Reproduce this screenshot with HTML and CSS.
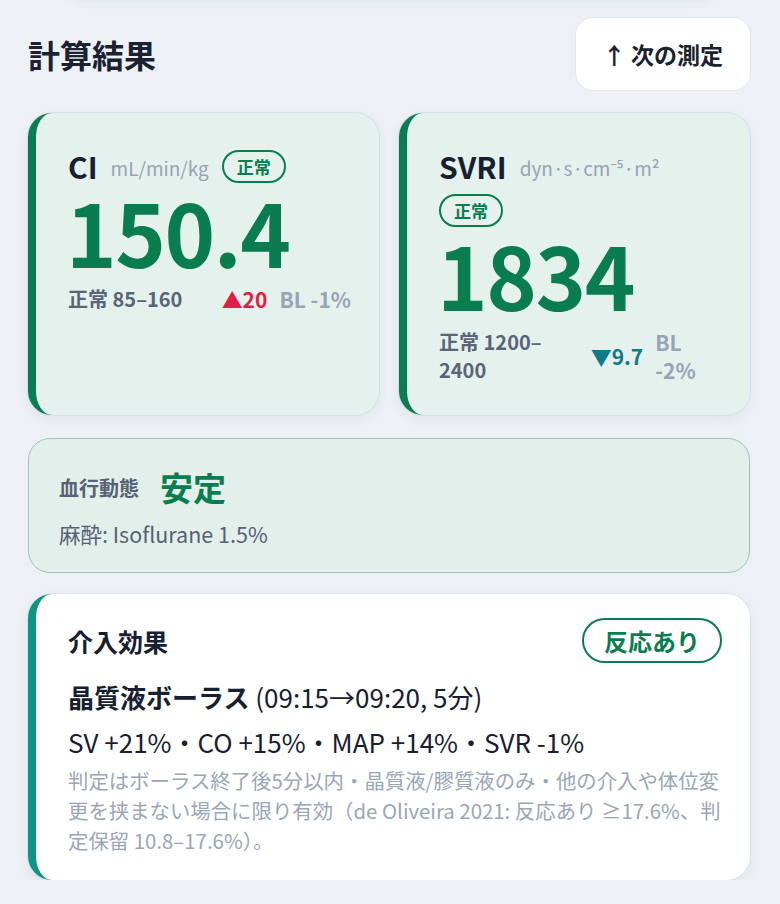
FILE: index.html
```html
<!DOCTYPE html>
<html lang="ja">
<head>
<meta charset="utf-8">
<title>計算結果</title>
<link rel="stylesheet" href="styles.css">
</head>
<body>
<div class="prev"></div>
<main class="page">
  <header class="head">
    <h2 class="title">計算結果</h2>
    <button class="next" type="button">↑ 次の測定</button>
  </header>

  <section class="grid">
    <article class="metric">
      <div class="m-head">
        <span class="m-name">CI</span>
        <span class="m-unit">mL/min/kg</span>
        <span class="badge">正常</span>
      </div>
      <div class="m-value">150.4</div>
      <div class="m-foot">
        <span class="range">正常 85–160</span>
        <span class="delta up">▲20</span>
        <span class="bl">BL -1%</span>
      </div>
    </article>

    <article class="metric">
      <div class="m-head">
        <span class="m-name">SVRI</span>
        <span class="m-unit">dyn·s·cm⁻⁵·m²</span>
        <span class="badge">正常</span>
      </div>
      <div class="m-value">1834</div>
      <div class="m-foot">
        <span class="range">正常 1200–2400</span>
        <span class="delta down">▼9.7</span>
        <span class="bl">BL -2%</span>
      </div>
    </article>
  </section>

  <section class="hemo">
    <div class="hemo-row">
      <span class="hemo-label">血行動態</span>
      <span class="hemo-state">安定</span>
    </div>
    <div class="hemo-sub">麻酔: Isoflurane 1.5%</div>
  </section>

  <section class="interv">
    <div class="iv-head">
      <span class="iv-title">介入効果</span>
      <span class="iv-badge">反応あり</span>
    </div>
    <div class="iv-name"><b>晶質液ボーラス</b> (09:15→09:20, 5分)</div>
    <div class="iv-metrics">SV +21%・CO +15%・MAP +14%・SVR -1%</div>
    <p class="iv-note">判定はボーラス終了後5分以内・晶質液/膠質液のみ・他の介入や体位変更を挟まない場合に限り有効（de Oliveira 2021: 反応あり ≥17.6%、判定保留 10.8–17.6%）。</p>
  </section>
</main>
</body>
</html>
```

FILE: styles.css
```css
* { box-sizing: border-box; }

html, body {
  margin: 0;
  padding: 0;
  background: #edf1f6;
}

body {
  font-family: "Noto Sans CJK JP", "Noto Sans", sans-serif;
  color: #1a2230;
  overflow: hidden;
}

.prev {
  height: 24px;
  margin: -30px 60px 0;
  border-radius: 0 0 24px 24px;
  background: #edf1f6;
  box-shadow: 0 4px 12px rgba(40, 130, 110, 0.14);
}

.page {
  padding: 23px 30px 0 28px;
  display: flex;
  flex-direction: column;
}

.head {
  display: flex;
  align-items: center;
  justify-content: space-between;
}

.title {
  margin: 0;
  font-size: 32px;
  font-weight: 700;
  line-height: 1.2;
  color: #1a2230;
}

.next {
  font-family: inherit;
  font-size: 23px;
  font-weight: 700;
  color: #1a2230;
  background: #ffffff;
  border: 1.5px solid #dfe6ef;
  border-radius: 18px;
  height: 74px;
  padding: 0 27px;
  margin-right: -1px;
  line-height: 1;
}

.grid {
  margin-top: 22px;
  display: grid;
  grid-template-columns: 1fr 1fr;
  gap: 20px;
}

.metric {
  background: #e4f1ec;
  border-left: 8px solid #0a7d50;
  border-radius: 24px;
  padding: 35px 28px 30px 32px;
  box-shadow: 0 0 0 1px rgba(210, 222, 232, 0.9), 0 4px 12px rgba(30, 50, 80, 0.07);
  min-height: 302px;
}

.m-head {
  display: flex;
  flex-wrap: wrap;
  align-items: center;
  column-gap: 13px;
  row-gap: 10px;
}

.m-name {
  font-size: 30px;
  font-weight: 700;
  line-height: 36px;
  color: #172030;
}

.m-unit {
  font-size: 19px;
  color: #97a3b6;
  line-height: 1.2;
  margin-top: 4px;
}

.badge {
  display: inline-block;
  font-size: 17px;
  font-weight: 700;
  color: #0a7d50;
  border: 2px solid #0a7d50;
  border-radius: 999px;
  padding: 1px 13px;
  line-height: 27px;
}

.m-value {
  font-size: 86px;
  font-weight: 700;
  line-height: 1;
  color: #0a7d50;
  margin-top: 4px;
  letter-spacing: -1.5px;
  margin-left: -2px;
}

.m-foot {
  margin-top: 11px;
  display: flex;
  align-items: center;
  gap: 12px;
  font-size: 20px;
  font-weight: 700;
  line-height: 28px;
}

.range {
  flex: 1 1 auto;
  color: #5a6477;
}

.delta {
  flex: 0 0 auto;
  font-size: 21px;
}
.delta.up { color: #e11d48; }
.delta.down { color: #0e7a8a; }

.bl {
  flex: 0 1 auto;
  font-size: 21px;
  color: #97a3b6;
}

.hemo {
  margin-top: 23px;
  background: #e2efea;
  border: 1.5px solid #9ac6b7;
  border-radius: 22px;
  padding: 26px 30px 22px 30px;
}

.hemo-row {
  display: flex;
  align-items: center;
  gap: 21px;
}

.hemo-label {
  font-size: 20px;
  font-weight: 700;
  color: #566175;
}

.hemo-state {
  font-size: 33px;
  font-weight: 700;
  color: #0a7d50;
  line-height: 44px;
}

.hemo-sub {
  margin-top: 9px;
  font-size: 21.5px;
  color: #566175;
  line-height: 32px;
}

.interv {
  margin-top: 21px;
  background: #ffffff;
  border-left: 8px solid #0e9482;
  border-radius: 24px;
  padding: 24px 28px 25px 32px;
  box-shadow: 0 0 0 1px rgba(215, 225, 235, 0.8), 0 4px 12px rgba(30, 50, 80, 0.07);
}

.iv-head {
  display: flex;
  align-items: center;
  justify-content: space-between;
}

.iv-title {
  font-size: 25px;
  font-weight: 700;
  color: #172030;
}

.iv-badge {
  font-size: 24px;
  font-weight: 700;
  color: #0a7d50;
  border: 2px solid #0a7d50;
  border-radius: 999px;
  padding: 4px 20px;
  line-height: 33px;
}

.iv-name {
  margin-top: 15px;
  font-size: 26px;
  line-height: 37px;
  color: #172030;
}

.iv-name b { font-weight: 700; }

.iv-metrics {
  margin-top: 8px;
  font-size: 26px;
  line-height: 37px;
  color: #172030;
}

.iv-note {
  margin: 5px 0 0;
  font-size: 20.4px;
  line-height: 30px;
  color: #9aa6b8;
}
```
